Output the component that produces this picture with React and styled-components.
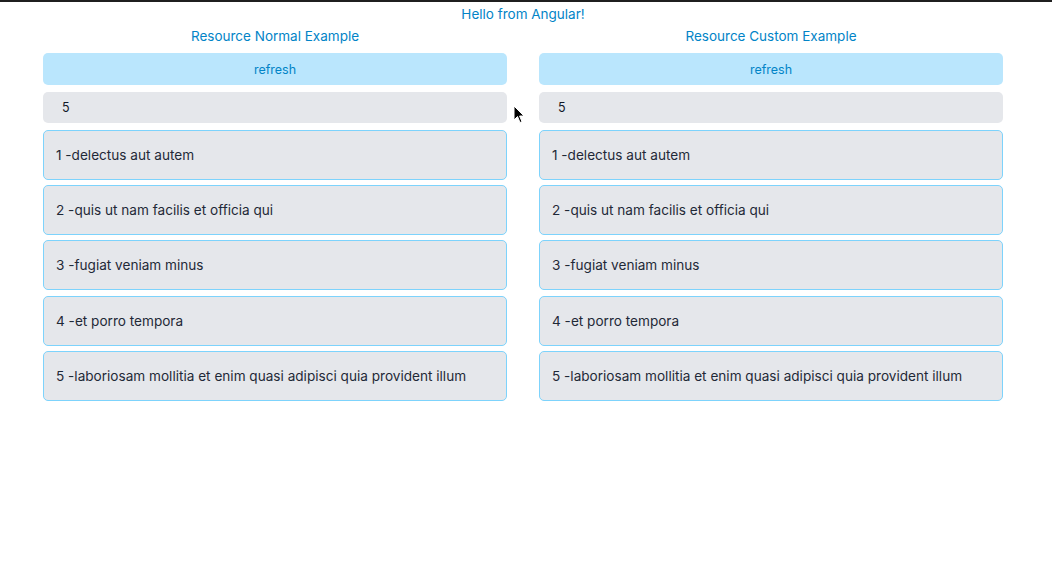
import styled, { createGlobalStyle } from 'styled-components';

const GlobalStyle = createGlobalStyle`
  html, body {
    margin: 0;
    padding: 0;
    background: #fff;
  }
  body {
    font-family: Inter, "Noto Sans", sans-serif;
    font-size: 13.5px;
    border-top: 2px solid #1f1f1f;
  }
`;

const Page = styled.div`
  position: relative;
  width: 1046px;
  min-height: 567px;
`;

const Title = styled.h1`
  margin: 0;
  padding-top: 2px;
  font-size: 13.5px;
  font-weight: 400;
  line-height: 20px;
  text-align: center;
  color: #0284c7;
`;

const Columns = styled.div`
  display: grid;
  grid-template-columns: 464px 464px;
  gap: 32px;
  padding: 0 43px;
`;

const Column = styled.section`
  display: flex;
  flex-direction: column;
  gap: 7px;
`;

const Heading = styled.h2`
  margin: 0;
  padding-top: 2px;
  font-size: 13.5px;
  font-weight: 400;
  line-height: 20px;
  text-align: center;
  color: #0284c7;
`;

const RefreshButton = styled.button`
  height: 32px;
  border: none;
  border-radius: 5px;
  background: #bae6fd;
  color: #0284c7;
  font-family: inherit;
  font-size: 12.5px;
`;

const CountInput = styled.input`
  box-sizing: border-box;
  height: 31px;
  padding: 0 19px;
  border: none;
  border-radius: 5px;
  background: #e5e7eb;
  color: #111827;
  font-family: inherit;
  font-size: 12.5px;
  outline: none;
`;

const List = styled.ul`
  display: flex;
  flex-direction: column;
  gap: 5.2px;
  margin: 0;
  padding: 0;
  list-style: none;
`;

const Item = styled.li`
  box-sizing: border-box;
  display: flex;
  align-items: center;
  height: 50px;
  padding: 0 12px;
  border: 1px solid #7dd3fc;
  border-radius: 5px;
  background: #e5e7eb;
  color: #1f2937;
  font-size: 13.6px;
`;

const Cursor = styled.svg`
  position: absolute;
  left: 513px;
  top: 103px;
`;

const todos = [
  'delectus aut autem',
  'quis ut nam facilis et officia qui',
  'fugiat veniam minus',
  'et porro tempora',
  'laboriosam mollitia et enim quasi adipisci quia provident illum',
];

const ResourceColumn = ({title}) => (
  <Column>
    <Heading>{title}</Heading>
    <RefreshButton>refresh</RefreshButton>
    <CountInput defaultValue="5" />
    <List>
      {todos.map((t, i) => (
        <Item key={i}>{i + 1} -{t}</Item>
      ))}
    </List>
  </Column>
);

const App = () => (
  <Page>
    <GlobalStyle />
    <Title>Hello from Angular!</Title>
    <Columns>
      <ResourceColumn title="Resource Normal Example" />
      <ResourceColumn title="Resource Custom Example" />
    </Columns>
    <Cursor width="12" height="19" viewBox="0 0 12 19">
      <path d="M1 1 L1 15 L4.5 11.5 L7 17.5 L9 16.7 L6.6 11 L11 11 Z" fill="#000" stroke="#fff" strokeWidth="1" />
    </Cursor>
  </Page>
);

export default App;
